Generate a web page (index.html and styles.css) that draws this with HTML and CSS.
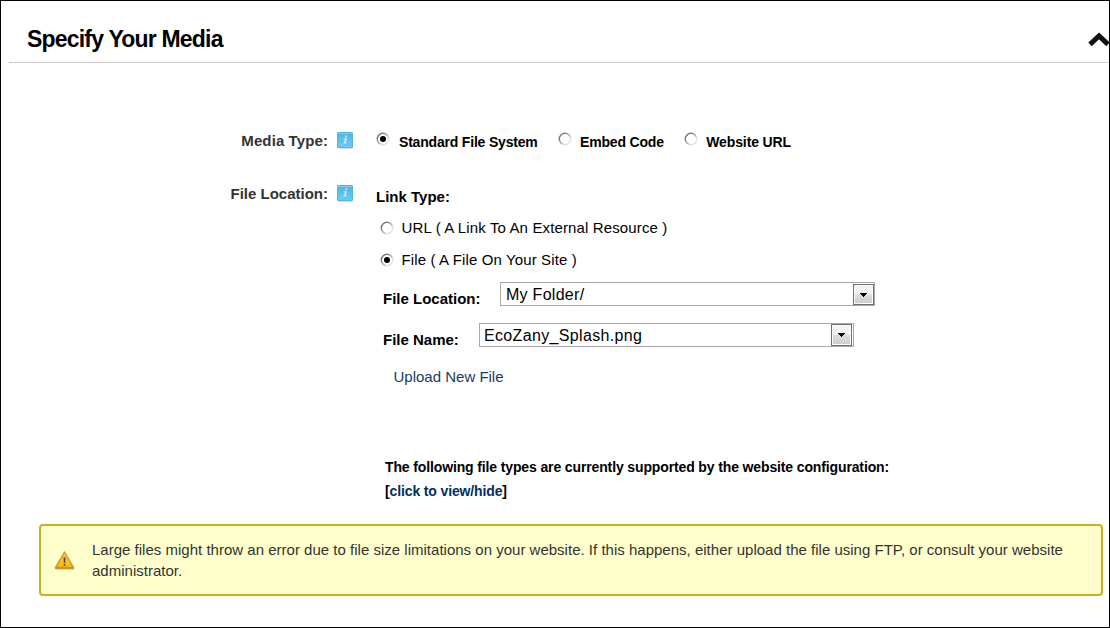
FILE: index.html
```html
<!DOCTYPE html>
<html lang="en">
<head>
<meta charset="utf-8">
<title>Specify Your Media</title>
<link rel="stylesheet" href="styles.css">
</head>
<body>
<svg width="0" height="0" class="defs">
  <defs>
    <linearGradient id="blue" x1="0" y1="0" x2="0" y2="1"><stop offset="0" stop-color="#4fb5e2"/><stop offset="1" stop-color="#6accf5"/></linearGradient>
    <linearGradient id="ring" x1="0" y1="0" x2="1" y2="1"><stop offset=".2" stop-color="#777"/><stop offset=".52" stop-color="#aaa"/><stop offset=".7" stop-color="#e2e2e2"/></linearGradient>
    <linearGradient id="gold" x1="0" y1="0" x2="0" y2="1"><stop offset="0" stop-color="#f2cc48"/><stop offset="1" stop-color="#f5bd12"/></linearGradient>
    <symbol id="info" viewBox="0 0 18 19">
      <rect x="1.500" y="2.500" width="15.500" height="15.500" rx="2" fill="#d6dde1"/>
      <rect x="1" y="1" width="16" height="16" rx="1.500" fill="#55b2dd"/>
      <rect x="2" y="2" width="14" height="14" rx=".5" fill="url(#blue)"/>
      <path d="M2 2h14v1H2z" fill="#82cdec"/>
      <path d="M9.600 4.600h1.800l-.3 1.400H9.300zM7.700 7.300h3.200l-1.100 4.300h1l-.2 1H7.200l.2-1h.8l.8-3.300H7.500z" fill="#d4eefa"/>
    </symbol>
    <symbol id="radio" viewBox="0 0 14 14">
      <circle cx="7" cy="7" r="5.700" fill="#fff" stroke="url(#ring)" stroke-width="1.500"/>
    </symbol>
    <symbol id="radio-on" viewBox="0 0 14 14">
      <circle cx="7" cy="7" r="5.700" fill="#fff" stroke="url(#ring)" stroke-width="1.500"/>
      <circle cx="7" cy="7" r="3" fill="#000"/>
    </symbol>
    <symbol id="down" viewBox="0 0 7 4"><path d="M0 0h7v1H6v1H5v1H4v1H3V3H2V2H1V1H0z" fill="#000"/></symbol>
  </defs>
</svg>
<div class="panel">
  <header class="head">
    <h1 class="title">Specify Your Media</h1>
    <svg class="chevron" viewBox="0 0 21 16"><path d="M2 13.300 11 5 20 13.300" fill="none" stroke="#111" stroke-width="5"/></svg>
  </header>
  <div class="row media">
    <div class="label"><span class="t-media">Media Type:</span><svg class="info"><use href="#info"/></svg></div>
    <div class="options">
      <label class="option"><svg class="radio"><use href="#radio-on"/></svg><span class="o1">Standard File System</span></label>
      <label class="option"><svg class="radio"><use href="#radio"/></svg><span class="o2">Embed Code</span></label>
      <label class="option"><svg class="radio"><use href="#radio"/></svg><span class="o3">Website URL</span></label>
    </div>
  </div>
  <div class="row location">
    <div class="label"><span class="t-loc">File Location:</span><svg class="info"><use href="#info"/></svg></div>
    <div class="content">
      <div class="link-type"><span>Link Type:</span></div>
      <label class="choice"><svg class="radio"><use href="#radio"/></svg><span class="c1">URL ( A Link To An External Resource )</span></label>
      <label class="choice"><svg class="radio"><use href="#radio-on"/></svg><span class="c2">File ( A File On Your Site )</span></label>
      <div class="field folder"><span class="name">File Location:</span><div class="select"><span class="s1">My Folder/</span><i class="arrow"><svg><use href="#down"/></svg></i></div></div>
      <div class="field file"><span class="name">File Name:</span><div class="select"><span class="s2">EcoZany_Splash.png</span><i class="arrow"><svg><use href="#down"/></svg></i></div></div>
      <a class="upload">Upload New File</a>
      <p class="types"><span class="p1">The following file types are currently supported by the website configuration:</span><br><span class="p2">[<a>click to view/hide</a>]</span></p>
    </div>
  </div>
  <div class="warning">
    <svg class="warn-icon" viewBox="0 0 21 20">
      <path d="M10.500 1.500 19.900 17.500Q20.400 19 18.900 19H2.100Q.6 19 1.100 17.500z" fill="#d98e1b" stroke="#d09a48" stroke-width=".8" stroke-linejoin="round"/>
      <path d="M10.500 3.200 18 16.800H3z" fill="url(#gold)"/>
      <path d="M9.500 7.500h2l-.4 5.500H9.900zM9.600 14h1.800v1.800H9.600z" fill="#5d4519"/>
    </svg>
    <p class="warn-text"><span class="w1">Large files might throw an error due to file size limitations on your website. If this happens, either upload the file using FTP, or consult your website</span><br><span class="w2">administrator.</span></p>
  </div>
</div>
</body>
</html>
```
FILE: styles.css
```css
* { box-sizing: border-box; }
body { margin: 0; font-family: "Liberation Sans", Arial, sans-serif; background: #fff; color: #000; }
.defs { display: block; }
.panel { width: 1110px; height: 628px; border: 1px solid #000; overflow: hidden; padding-left: 8px; }
.head { display: flex; justify-content: space-between; height: 62px; border-bottom: 1px solid #ccc; padding-left: 18px; }
.title { margin: 24px 0 0; font-size: 23px; line-height: 28px; letter-spacing: -.8px; font-weight: bold; white-space: nowrap; }
.chevron { width: 21px; height: 16px; margin-top: 30px; }
.row { display: grid; grid-template-columns: 345px 1fr; column-gap: 22px; white-space: nowrap; }
.label { display: flex; justify-content: flex-end; gap: 8px; height: 20px; font-size: 15px; line-height: 20px; font-weight: bold; color: #333; }
.t-media { letter-spacing: .1px; }
.info { width: 18px; height: 19px; }
.media { margin-top: 68px; height: 53px; }
.options { display: flex; padding-top: 1px; }
.option { display: flex; font-size: 14px; line-height: 20px; height: 20px; font-weight: bold; gap: 9px; margin-right: 20.5px; letter-spacing: -.19px; }
.option + .option { gap: 8px; }
.o3 { letter-spacing: -.12px; }
.radio { width: 14px; height: 14px; flex: none; }
.location { height: 340px; }
.link-type { padding-top: 3px; height: 34px; font-size: 15px; line-height: 20px; font-weight: bold; }
.choice { display: flex; align-items: center; gap: 8px; height: 20px; margin: 0 0 12px 3.500px; font-size: 15px; line-height: 20px; letter-spacing: .13px; }
.field { display: flex; padding-left: 7px; }
.name { font-size: 15px; line-height: 20px; font-weight: bold; padding-top: 7px; flex: none; }
.select { display: flex; justify-content: space-between; width: 375px; height: 24px; border: 1px solid #a9a9ad; padding: 1px 0 0 5px; font-size: 16px; line-height: 22px; }
.s1 { letter-spacing: .28px; }
.s2 { letter-spacing: .34px; }
.folder { height: 41px; }
.folder .name { width: 117px; }
.file .name { width: 96px; }
.file .select { padding: 0 1px 0 4px; line-height: 24px; }
.arrow { display: flex; align-items: center; justify-content: center; width: 21px; height: 21px; border: 1px solid #707070; box-shadow: inset 0 0 0 1px #fafafa; background: linear-gradient(#f3f3f3 0 48%, #ddd 52%, #ccc); }
.file .arrow { height: 22px; }
.arrow svg { width: 7px; height: 4px; }
.upload { display: block; width: max-content; margin: 44px 0 0 17.500px; font-size: 15px; line-height: 20px; color: #14405f; }
.file { height: 0; }
.types { margin: 68px 0 0 9px; font-size: 14px; line-height: 24px; font-weight: bold; letter-spacing: -.13px; }
.types a { color: #003060; }
.warning { display: flex; width: 1064px; height: 72px; margin-left: 30px; border: 2px solid #cbb01d; border-radius: 4px; background: #ffc; }
.warn-icon { width: 21px; height: 20px; margin: 24px 17px 0 13px; flex: none; }
.warn-text { margin: 13px 0 0; font-size: 15px; line-height: 21px; color: #333; white-space: nowrap; letter-spacing: .01px; }
```
